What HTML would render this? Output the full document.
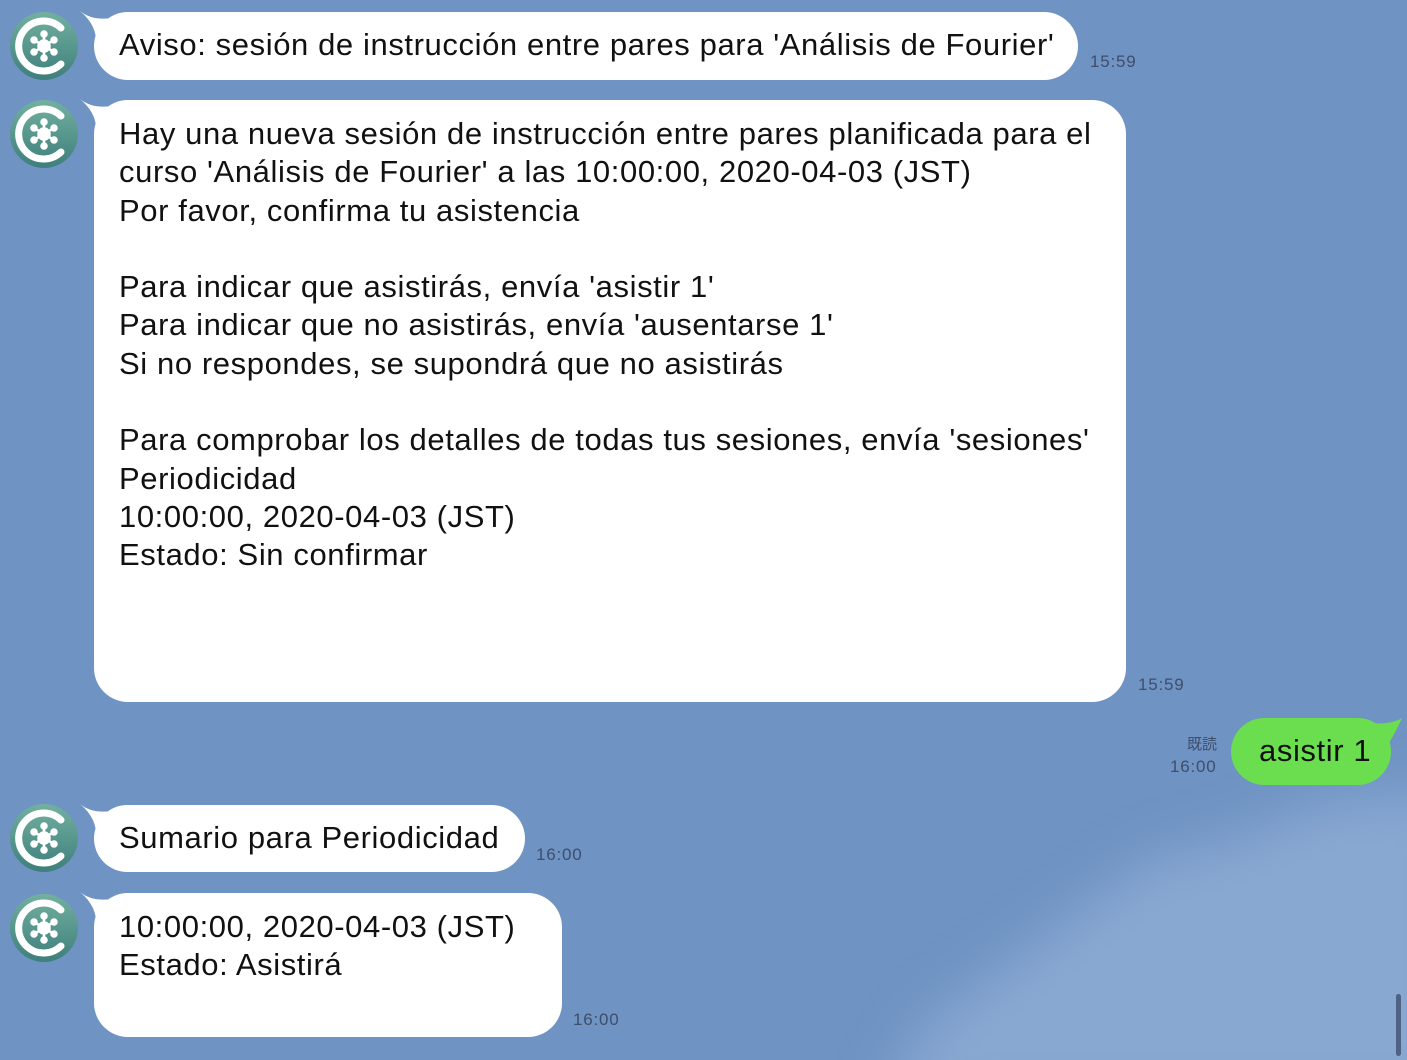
<!DOCTYPE html>
<html><head><meta charset="utf-8"><style>
html,body{margin:0;padding:0}
body{width:1407px;height:1060px;overflow:hidden;position:relative;background:#6f93c3;font-family:"Liberation Sans","Noto Sans CJK JP",sans-serif}
.b{position:absolute;background:#fff;border-radius:34px;color:#111;font-size:31px;line-height:38.3px;letter-spacing:0.6px;box-sizing:border-box;padding-left:25px;white-space:pre}
.t{position:absolute;font-size:17px;color:#3e4e6b;line-height:21px;letter-spacing:0.8px}
</style></head><body>
<svg style="position:absolute;left:0;top:0" width="1407" height="1060">
<defs>
<filter id="bl" x="-50%" y="-50%" width="200%" height="200%"><feGaussianBlur stdDeviation="25"/></filter>
<linearGradient id="ag" x1="0" y1="0" x2="0" y2="1"><stop offset="0" stop-color="#72b09f"/><stop offset="1" stop-color="#3f7f7c"/></linearGradient>
<g id="avatar">
<circle cx="35" cy="35" r="34" fill="url(#ag)"/>
<path d="M52 17 A25 25 0 1 0 52 53" fill="none" stroke="#fff" stroke-width="7" stroke-linecap="round"/>
<g fill="#fff" stroke="#fff" stroke-width="2.5">
<circle cx="35" cy="35" r="5.5"/>
<line x1="35" y1="35" x2="35" y2="23"/><line x1="35" y1="35" x2="35" y2="47"/>
<line x1="35" y1="35" x2="25" y2="29"/><line x1="35" y1="35" x2="45" y2="29"/>
<line x1="35" y1="35" x2="25" y2="41"/><line x1="35" y1="35" x2="45" y2="41"/>
<circle cx="35" cy="23" r="2.5"/><circle cx="35" cy="47" r="2.5"/>
<circle cx="25" cy="29" r="2.5"/><circle cx="45" cy="29" r="2.5"/>
<circle cx="25" cy="41" r="2.5"/><circle cx="45" cy="41" r="2.5"/>
</g></g>
<path id="tl" d="M-14 -3 Q2 10 30 1 L30 32 L2 32 Q4 12 -14 -3 Z" fill="#fff"/>
</defs>
<path d="M1450 790 L1330 800 L1230 840 L1150 860 L1080 910 L1000 970 L930 1020 L880 1100 L1450 1100 Z" fill="#88a7d1" filter="url(#bl)"/>
<use href="#avatar" x="9" y="11"/>
<use href="#avatar" x="9" y="99"/>
<use href="#avatar" x="9" y="803"/>
<use href="#avatar" x="9" y="893"/>
<use href="#tl" x="94" y="14"/>
<use href="#tl" x="94" y="102"/>
<use href="#tl" x="94" y="807"/>
<use href="#tl" x="94" y="895"/>
<path d="M1355 720 Q1385 728 1402 718 Q1392 740 1384 750 L1370 750 Z" fill="#6ade4f"/>
<rect x="1396" y="994" width="5" height="62" rx="2.5" fill="#4f6283"/>
</svg>
<div class="b" style="left:94px;top:12px;width:984px;height:68px;padding-top:14px">Aviso: sesión de instrucción entre pares para 'Análisis de Fourier'</div>
<div class="t" style="left:1090px;top:51px">15:59</div>
<div class="b" style="left:94px;top:100px;width:1032px;height:602px;padding-top:15px">Hay una nueva sesión de instrucción entre pares planificada para el
curso 'Análisis de Fourier' a las 10:00:00, 2020-04-03 (JST)
Por favor, confirma tu asistencia

Para indicar que asistirás, envía 'asistir 1'
Para indicar que no asistirás, envía 'ausentarse 1'
Si no respondes, se supondrá que no asistirás

Para comprobar los detalles de todas tus sesiones, envía 'sesiones'
Periodicidad
10:00:00, 2020-04-03 (JST)
Estado: Sin confirmar</div>
<div class="t" style="left:1138px;top:674px">15:59</div>
<div class="b" style="left:1231px;top:718px;width:160px;height:67px;padding-top:14px;background:#6ade4f;padding-left:28px">asistir 1</div>
<div class="t" style="left:1187px;top:734px;font-size:15px;letter-spacing:0">既読</div>
<div class="t" style="left:1170px;top:756px">16:00</div>
<div class="b" style="left:94px;top:805px;width:431px;height:67px;padding-top:14px">Sumario para Periodicidad</div>
<div class="t" style="left:536px;top:844px">16:00</div>
<div class="b" style="left:94px;top:893px;width:468px;height:144px;padding-top:15px">10:00:00, 2020-04-03 (JST)
Estado: Asistirá</div>
<div class="t" style="left:573px;top:1009px">16:00</div>
</body></html>
